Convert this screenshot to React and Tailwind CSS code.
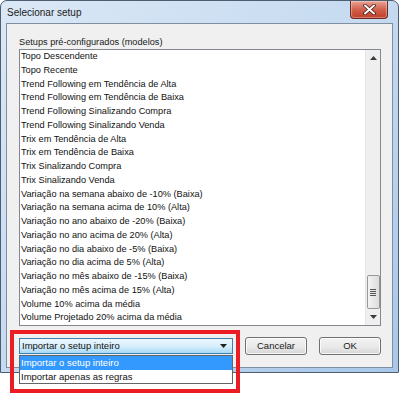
import React from "react";

const setups = [
  "Topo Descendente",
  "Topo Recente",
  "Trend Following em Tendência de Alta",
  "Trend Following em Tendência de Baixa",
  "Trend Following Sinalizando Compra",
  "Trend Following Sinalizando Venda",
  "Trix em Tendência de Alta",
  "Trix em Tendência de Baixa",
  "Trix Sinalizando Compra",
  "Trix Sinalizando Venda",
  "Variação na semana abaixo de -10% (Baixa)",
  "Variação na semana acima de 10% (Alta)",
  "Variação no ano abaixo de -20% (Baixa)",
  "Variação no ano acima de 20% (Alta)",
  "Variação no dia abaixo de -5% (Baixa)",
  "Variação no dia acima de 5% (Alta)",
  "Variação no mês abaixo de -15% (Baixa)",
  "Variação no mês acima de 15% (Alta)",
  "Volume 10% acima da média",
  "Volume Projetado 20% acima da média",
];

function CloseButton() {
  return (
    <div className="mr-[5px] w-[38px] h-[18px] rounded-b-[4px] border border-t-0 border-[#6b2a22] bg-gradient-to-b from-[#e9a396] via-[#d0614c] to-[#c13b25] flex items-center justify-center shadow-[inset_0_0_1px_1px_rgba(255,255,255,0.35)]">
      <svg width="13" height="11" viewBox="0 0 13 11">
        <path d="M2 1.5 L11 9.5 M11 1.5 L2 9.5" stroke="#4a1a14" strokeWidth="3.6" strokeLinecap="round" />
        <path d="M2 1.5 L11 9.5 M11 1.5 L2 9.5" stroke="#ffffff" strokeWidth="2" strokeLinecap="round" />
      </svg>
    </div>
  );
}

function Scrollbar() {
  return (
    <div className="w-[15px] h-full bg-[#efefef] border-l border-[#e6e6e6] flex flex-col items-center">
      <div className="h-[16px] flex items-center justify-center">
        <svg width="7" height="4" viewBox="0 0 7 4">
          <path d="M0 4 L3.5 0 L7 4 Z" fill="#3c3c3c" />
        </svg>
      </div>
      <div className="flex-1" />
      <div className="w-[13px] h-[34px] rounded-[2px] border border-[#989898] bg-gradient-to-r from-[#f3f3f3] to-[#dcdcdc] flex flex-col items-center justify-center gap-[1px]">
        <div className="w-[6px] h-[1px] bg-[#555]" />
        <div className="w-[6px] h-[1px] bg-[#555]" />
        <div className="w-[6px] h-[1px] bg-[#555]" />
        <div className="w-[6px] h-[1px] bg-[#555]" />
      </div>
      <div className="h-[16px] flex items-center justify-center">
        <svg width="7" height="4" viewBox="0 0 7 4">
          <path d="M0 0 L7 0 L3.5 4 Z" fill="#3c3c3c" />
        </svg>
      </div>
    </div>
  );
}

function Button({ children }) {
  return (
    <div className="w-[62px] h-[18px] rounded-[3px] border border-[#707070] bg-gradient-to-b from-[#f2f2f2] via-[#ebebeb] to-[#d6d6d6] flex items-center justify-center text-[9.5px] text-[#1a1a1a] shadow-[inset_0_0_0_1px_rgba(255,255,255,0.8)]">
      {children}
    </div>
  );
}

export default function App() {
  return (
    <div
      className="relative w-[400px] h-[397px] bg-white overflow-hidden text-black"
      style={{ fontFamily: '"Liberation Sans", Arial, sans-serif' }}
    >
      {/* Window */}
      <div className="w-[399px] h-[373px] rounded-t-[7px] border border-[#4d5e73] bg-gradient-to-br from-[#dbe8f6] via-[#c5daf0] to-[#a9c7e8] flex flex-col px-[5px] pb-[4px]">
        {/* Title bar */}
        <div className="h-[22px] flex items-start justify-between">
          <div className="pl-[1px] pt-[6px] text-[10px] leading-[12px] text-[#1b1b1b]">Selecionar setup</div>
          <CloseButton />
        </div>

        {/* Client area */}
        <div className="flex-1 border border-[#7f8fa3] bg-[#f0f0f0] flex flex-col pl-[12px]">
          <div className="mt-[12px] h-[13px] text-[9.2px] leading-[13px] text-[#1a1a1a]">
            Setups pré-configurados (modelos)
          </div>
          <div className="w-[362px] h-[277px] border border-[#828790] bg-white flex">
            <div className="flex-1 flex flex-col pl-[1px]">
              {setups.map((s, i) => (
                <div key={i} className="h-[13.75px] leading-[13.75px] text-[9.2px] text-[#111] whitespace-nowrap">
                  {s}
                </div>
              ))}
            </div>
            <Scrollbar />
          </div>

          {/* Bottom row */}
          <div className="mt-[11px] flex items-start gap-[12px]">
            <div className="mt-[1px] w-[214px] h-[16px] border border-[#3c7fb1] bg-gradient-to-b from-[#eaf6fd] via-[#d9f0fc] to-[#a7d9f5] flex items-center justify-between pl-[2px] pr-[5px] text-[9.5px] text-[#111]">
              <span>Importar o setup inteiro</span>
              <svg width="7" height="4" viewBox="0 0 7 4">
                <path d="M0 0 L7 0 L3.5 4 Z" fill="#222" />
              </svg>
            </div>
            <Button>Cancelar</Button>
            <Button>OK</Button>
          </div>
        </div>
      </div>

      {/* Open dropdown */}
      <div className="absolute left-[19px] top-[355px] w-[214px] border border-[#646464] bg-white flex flex-col text-[9.5px]">
        <div className="h-[13.5px] leading-[13.5px] pl-[1px] bg-[#3399ff] text-white">Importar o setup inteiro</div>
        <div className="h-[13.5px] leading-[13.5px] pl-[1px] text-[#111]">Importar apenas as regras</div>
      </div>

      {/* Highlight box */}
      <div className="absolute left-[10px] top-[330px] w-[230px] h-[63px] border-[4px] border-[#ec1c24]" />
    </div>
  );
}
